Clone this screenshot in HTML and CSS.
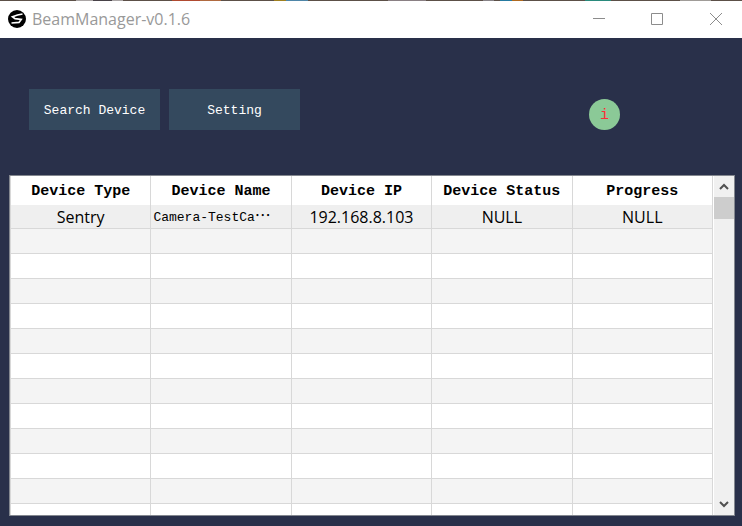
FILE: index.html
```html
<!DOCTYPE html>
<html lang="en">
<head>
<meta charset="utf-8">
<title>BeamManager-v0.1.6</title>
<link rel="stylesheet" href="styles.css">
</head>
<body>
<div class="backdrop"></div>
<header class="titlebar">
  <svg class="logo" viewBox="0 0 18 18" aria-hidden="true">
    <circle cx="9" cy="9" r="9" fill="#000"/>
    <path d="M14.5 4L9.5 5L4.5 6.8L7 8.6L13.2 9.4L11 12.4L3.5 13" fill="none" stroke="#fff" stroke-width="1.7"/>
  </svg>
  <h1 class="title">BeamManager-v0.1.6</h1>
  <div class="window-controls">
    <button class="win-btn" aria-label="Minimize"><svg viewBox="0 0 12 12"><path d="M0 5.5H12"/></svg></button>
    <button class="win-btn" aria-label="Maximize"><svg viewBox="0 0 12 12"><path d="M.5 .5H11.5V11.5H.5Z"/></svg></button>
    <button class="win-btn" aria-label="Close"><svg viewBox="0 0 12 12"><path d="M0 0L12 12M12 0L0 12"/></svg></button>
  </div>
</header>
<main class="content">
  <div class="toolbar">
    <button class="action">Search Device</button>
    <button class="action">Setting</button>
    <button class="info">i</button>
  </div>
  <section class="panel">
    <div class="table-view">
      <table class="devices">
        <thead>
          <tr><th>Device Type</th><th>Device Name</th><th>Device IP</th><th>Device Status</th><th>Progress</th></tr>
        </thead>
        <tbody>
          <tr class="selected"><td>Sentry</td><td class="name">Camera-TestCa<span class="more" lang="zh-CN">…</span></td><td>192.168.8.103</td><td>NULL</td><td>NULL</td></tr>
          <tr><td></td><td></td><td></td><td></td><td></td></tr>
          <tr><td></td><td></td><td></td><td></td><td></td></tr>
          <tr><td></td><td></td><td></td><td></td><td></td></tr>
          <tr><td></td><td></td><td></td><td></td><td></td></tr>
          <tr><td></td><td></td><td></td><td></td><td></td></tr>
          <tr><td></td><td></td><td></td><td></td><td></td></tr>
          <tr><td></td><td></td><td></td><td></td><td></td></tr>
          <tr><td></td><td></td><td></td><td></td><td></td></tr>
          <tr><td></td><td></td><td></td><td></td><td></td></tr>
          <tr><td></td><td></td><td></td><td></td><td></td></tr>
          <tr><td></td><td></td><td></td><td></td><td></td></tr>
          <tr><td></td><td></td><td></td><td></td><td></td></tr>
        </tbody>
      </table>
    </div>
    <div class="scrollbar">
      <button class="scroll-btn" aria-label="Scroll up"><svg viewBox="0 0 10 7"><path d="M1 6L5 2L9 6"/></svg></button>
      <div class="thumb"></div>
      <button class="scroll-btn down" aria-label="Scroll down"><svg viewBox="0 0 10 7"><path d="M1 1L5 5L9 1"/></svg></button>
    </div>
  </section>
</main>
</body>
</html>
```
FILE: styles.css
```css
* { box-sizing: border-box; }

body {
  margin: 0;
  height: 100vh;
  display: flex;
  flex-direction: column;
  overflow: hidden;
  background: #29304a;
  font-family: "Open Sans", "Noto Sans", sans-serif;
}

button {
  margin: 0;
  padding: 0;
  border: 0;
  background: none;
}

/* Sliver of the desktop above the window */
.backdrop {
  height: 1px;
  flex: none;
  background: linear-gradient(90deg,
    #5c5048 76px, #aaa5a5 76px 93px, #484248 93px 112px, #aaa5a5 112px 123px,
    #5c5048 123px 172px, #b04a30 172px 200px, #b06a40 200px 221px,
    #5c5048 221px 274px, #a08020 274px 286px, #4f86a8 286px 308px,
    #5c5048 308px 388px, #8a8084 388px 426px, #5c5048 426px 483px,
    #888488 483px 494px, #5c5048 494px 500px, #267aa0 500px 512px,
    #b06a20 512px 523px, #5c5048 523px 585px, #2a8a7c 585px 611px,
    #5c5048 611px 680px, #a09c98 680px 711px, #5c5048 711px);
}

.titlebar {
  display: flex;
  align-items: center;
  height: 37px;
  flex: none;
  padding: 0 0 1px 8px;
  gap: 6px;
  background: #fff;
}

.logo { width: 18px; height: 18px; }

.title {
  margin: 0;
  flex: 1;
  font-size: 16px;
  line-height: 20px;
  font-weight: 400;
  color: #999;
}

.window-controls { display: flex; align-self: stretch; gap: 8px; }

.win-btn {
  width: 50px;
  display: flex;
  align-items: center;
  justify-content: center;
}

.win-btn:last-child { width: 52px; }

.win-btn svg {
  width: 12px;
  height: 12px;
  fill: none;
  stroke: #8c8c8c;
}

.content {
  flex: 1;
  min-height: 0;
  display: flex;
  flex-direction: column;
  padding: 51px 7px 10px 9px;
}

.toolbar {
  display: flex;
  align-items: center;
  gap: 9px;
  padding: 0 115px 0 20px;
  margin-bottom: 45px;
}

.action {
  width: 131px;
  height: 41px;
  padding-top: 2px;
  background: #34495e;
  color: #fff;
  font: 13px/20px "Liberation Mono", monospace;
}

.info {
  width: 31px;
  height: 31px;
  padding-top: 2px;
  margin-top: 10px;
  margin-left: auto;
  border-radius: 50%;
  background: #8bc997;
  color: #ff2a36;
  font: 15px/20px "Liberation Mono", monospace;
}

.panel {
  flex: 1;
  min-height: 0;
  display: flex;
  background: #fff;
  border: 1px solid #83878f;
}

.table-view {
  flex: 1;
  overflow: hidden;
  border-left: 1px solid #d8d8d8;
}

.devices {
  width: 100%;
  table-layout: fixed;
  border-collapse: separate;
  border-spacing: 0;
}

.devices th,
.devices td {
  padding: 0;
  border-right: 1px solid #d8d8d8;
  text-align: center;
  white-space: nowrap;
}

.devices th {
  height: 29px;
  padding-top: 2px;
  font: bold 15px/20px "Liberation Mono", monospace;
}

.devices td {
  height: 25px;
  border-bottom: 1px solid #d8d8d8;
  font-size: 16px;
  line-height: 20px;
}

.devices tr:nth-child(even) td { background: #f4f4f4; }

.devices .selected td {
  height: 24px;
  background: #efefef;
}

.devices .name {
  padding-left: 2px;
  text-align: left;
  font: 13px/20px "Liberation Mono", monospace;
}

.more {
  font-family: "Noto Sans CJK SC", sans-serif;
  font-size: 16px;
  line-height: 1;
}

.scrollbar {
  width: 21px;
  display: flex;
  flex-direction: column;
  background: #f0f0f0;
  border-left: 1px solid #fff;
}

.scroll-btn {
  height: 21px;
  display: flex;
  align-items: center;
  justify-content: center;
}

.scroll-btn svg {
  width: 10px;
  height: 7px;
  fill: none;
  stroke: #505050;
  stroke-width: 2;
}

.thumb { height: 22px; background: #cdcdcd; }

.down { margin-top: auto; }
```
